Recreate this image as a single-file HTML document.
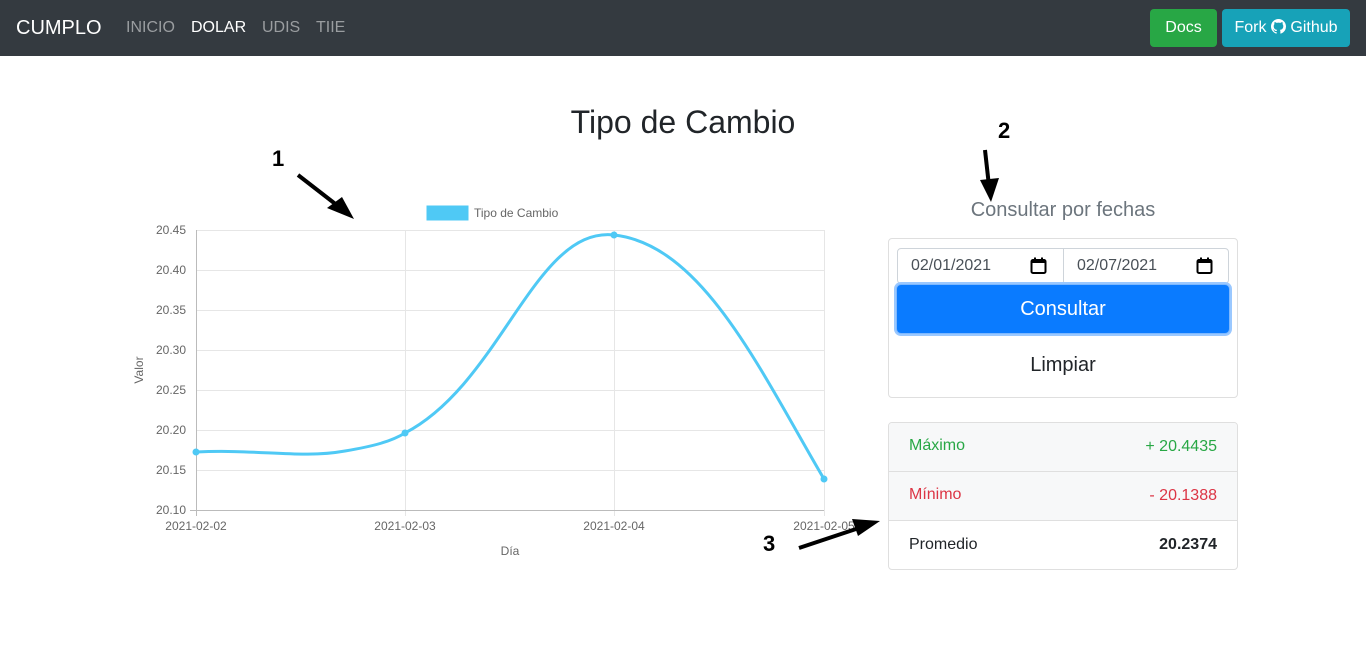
<!DOCTYPE html>
<html><head><meta charset="utf-8"><style>
body{margin:0;width:1366px;height:660px;background:#fff;font-family:"Liberation Sans",sans-serif;position:relative;overflow:hidden;color:#212529}
.nav{position:absolute;left:0;top:0;width:1366px;height:56px;background:#343a40}
.abs{position:absolute}
.btn{position:absolute;top:9px;height:38px;border-radius:4px;color:#fff;font-size:16px;line-height:38px;text-align:center}
.card{position:absolute;border:1px solid #dfdfdf;border-radius:4px;box-sizing:border-box}
.date{position:absolute;top:9px;height:36px;border:1px solid #ced4da;box-sizing:border-box;font-size:16px;line-height:34px;padding-left:13px;color:#495057}
.row{position:absolute;left:0;width:348px;height:49px;font-size:16px;box-sizing:border-box}
</style></head><body>
<div class="nav">
<div class="abs" style="left:16px;top:17px;font-size:20px;color:#fff">CUMPLO</div>
<div class="abs" style="left:126px;top:19px;font-size:16px;color:#9a9da0">INICIO</div>
<div class="abs" style="left:191px;top:19px;font-size:16px;color:#fff">DOLAR</div>
<div class="abs" style="left:262px;top:19px;font-size:16px;color:#9a9da0">UDIS</div>
<div class="abs" style="left:316px;top:19px;font-size:16px;color:#9a9da0">TIIE</div>
<div class="btn" style="left:1150px;width:67px;background:#28a745">Docs</div>
<div class="btn" style="left:1222px;width:128px;background:#17a2b8">Fork <svg width="15" height="15" viewBox="0 0 16 16" style="vertical-align:-2px"><path fill="#fff" d="M8 0C3.58 0 0 3.58 0 8c0 3.54 2.29 6.530 5.47 7.59.4.07.55-.17.55-.38v-1.33c-2.23.48-2.7-1.07-2.7-1.07-.36-.93-.89-1.17-.89-1.17-.73-.5.06-.49.06-.49.8.06 1.230.83 1.23.83.72 1.22 1.87.87 2.33.67.07-.52.28-.87.5-1.07-1.78-.2-3.64-.89-3.64-3.95 0-.87.31-1.59.82-2.15-.08-.2-.36-1.02.08-2.12 0 0 .67-.21 2.2.82a7.6 7.6 0 014 0c1.53-1.04 2.2-.82 2.2-.82.44 1.1.16 1.92.08 2.12.51.56.82 1.27.82 2.15 0 3.07-1.87 3.75-3.65 3.95.29.25.54.73.54 1.48v2.2c0 .21.15.46.55.38A8 8 0 0016 8c0-4.42-3.58-8-8-8z"/></svg> Github</div>
</div>
<div class="abs" style="left:0;width:1366px;top:104px;text-align:center;font-size:32px">Tipo de Cambio</div>

<svg class="abs" style="left:0;top:0" width="880" height="600" font-family="Liberation Sans, sans-serif">
<rect x="427" y="206" width="41" height="14" fill="#4fc9f5" stroke="#4fc9f5"/>
<text x="474" y="217" font-size="12" fill="#666">Tipo de Cambio</text>
<g stroke="#e6e6e6" stroke-width="1">
<line x1="196" y1="230.5" x2="824" y2="230.5"/><line x1="196" y1="270.5" x2="824" y2="270.5"/><line x1="196" y1="310.5" x2="824" y2="310.5"/><line x1="196" y1="350.5" x2="824" y2="350.5"/><line x1="196" y1="390.5" x2="824" y2="390.5"/><line x1="196" y1="430.5" x2="824" y2="430.5"/><line x1="196" y1="470.5" x2="824" y2="470.5"/>
<line x1="405.5" y1="230" x2="405.5" y2="516"/><line x1="614.5" y1="230" x2="614.5" y2="516"/><line x1="824.5" y1="230" x2="824.5" y2="516"/>
</g>
<g stroke="#bbb"><line x1="196.5" y1="230" x2="196.5" y2="516"/><line x1="190" y1="510.5" x2="824" y2="510.5"/></g>
<g font-size="12" fill="#666" text-anchor="end">
<text x="186" y="234">20.45</text><text x="186" y="274">20.40</text><text x="186" y="314">20.35</text><text x="186" y="354">20.30</text><text x="186" y="394">20.25</text><text x="186" y="434">20.20</text><text x="186" y="474">20.15</text><text x="186" y="514">20.10</text>
</g>
<g font-size="12" fill="#666" text-anchor="middle">
<text x="196" y="530">2021-02-02</text><text x="405" y="530">2021-02-03</text><text x="614" y="530">2021-02-04</text><text x="824" y="530">2021-02-05</text>
<text x="510" y="555">Día</text>
<text x="143" y="370" transform="rotate(-90 143 370)">Valor</text>
</g>
<path d="M196,452 C260,449 300,459 345,451 C375,446 392,441 405,433 C501.6,382.9 534.8,226.3 614,235 C702.4,244.7 760,370 824,479" fill="none" stroke="#4fc9f5" stroke-width="3"/>
<g fill="#4fc9f5"><circle cx="196" cy="452" r="3.5"/><circle cx="405" cy="433" r="3.5"/><circle cx="614" cy="235" r="3.5"/><circle cx="824" cy="479" r="3.5"/></g>
<text x="272" y="166" font-size="22" font-weight="bold" fill="#000">1</text>
<line x1="298" y1="175" x2="338" y2="206" stroke="#000" stroke-width="4"/>
<polygon points="354,219 327,208 342,197" fill="#000"/>
<text x="763" y="551" font-size="22" font-weight="bold" fill="#000">3</text>
<line x1="799" y1="548" x2="862" y2="527" stroke="#000" stroke-width="4"/>
<polygon points="880,521 858,536 852,519" fill="#000"/>
</svg>
<svg class="abs" style="left:960px;top:0" width="80" height="220">
<text x="38" y="138" font-size="22" font-weight="bold" fill="#000" font-family="Liberation Sans, sans-serif">2</text>
<line x1="25" y1="150" x2="29" y2="186" stroke="#000" stroke-width="4"/>
<polygon points="31,202 20,180 39,178" fill="#000"/>
</svg>
<div class="abs" style="left:888px;width:350px;top:199px;text-align:center;font-size:20px;color:#6c757d">Consultar por fechas</div>
<div class="card" style="left:888px;top:238px;width:350px;height:160px">
<div class="date" style="left:8px;width:167px;border-radius:4px 0 0 4px">02/01/2021</div>
<div class="date" style="left:174px;width:166px;border-radius:0 4px 4px 0">02/07/2021</div>
<svg class="abs" style="left:141px;top:18px" width="17" height="17" viewBox="0 0 17 17"><rect x="1.5" y="3" width="14" height="13" rx="1.5" fill="none" stroke="#000" stroke-width="2"/><rect x="1.5" y="3" width="14" height="3" fill="#000"/><rect x="4" y="0.5" width="2" height="3" fill="#000"/><rect x="11" y="0.5" width="2" height="3" fill="#000"/></svg>
<svg class="abs" style="left:307px;top:18px" width="17" height="17" viewBox="0 0 17 17"><rect x="1.5" y="3" width="14" height="13" rx="1.5" fill="none" stroke="#000" stroke-width="2"/><rect x="1.5" y="3" width="14" height="3" fill="#000"/><rect x="4" y="0.5" width="2" height="3" fill="#000"/><rect x="11" y="0.5" width="2" height="3" fill="#000"/></svg>
<div class="abs" style="left:7px;top:45px;width:334px;height:50px;background:#0a7bff;border:1px solid #7db8ff;box-shadow:0 0 0 2px #9ac8ff;border-radius:5px;color:#fff;font-size:20px;line-height:48px;text-align:center;box-sizing:border-box">Consultar</div>
<div class="abs" style="left:0;width:348px;top:115px;text-align:center;font-size:20px">Limpiar</div>
</div>
<div class="card" style="left:888px;top:422px;width:350px;height:148px;overflow:hidden">
<div class="row" style="top:0;background:#f7f8f9;border-bottom:1px solid #dfdfdf"><span class="abs" style="left:20px;top:14px;color:#28a745">Máximo</span><span class="abs" style="right:20px;top:15px;color:#28a745">+ 20.4435</span></div>
<div class="row" style="top:49px;background:#f7f8f9;border-bottom:1px solid #dfdfdf"><span class="abs" style="left:20px;top:14px;color:#dc3545">Mínimo</span><span class="abs" style="right:20px;top:15px;color:#dc3545">- 20.1388</span></div>
<div class="row" style="top:98px"><span class="abs" style="left:20px;top:15px">Promedio</span><span class="abs" style="right:20px;top:15px;font-weight:bold">20.2374</span></div>
</div>
</body></html>
